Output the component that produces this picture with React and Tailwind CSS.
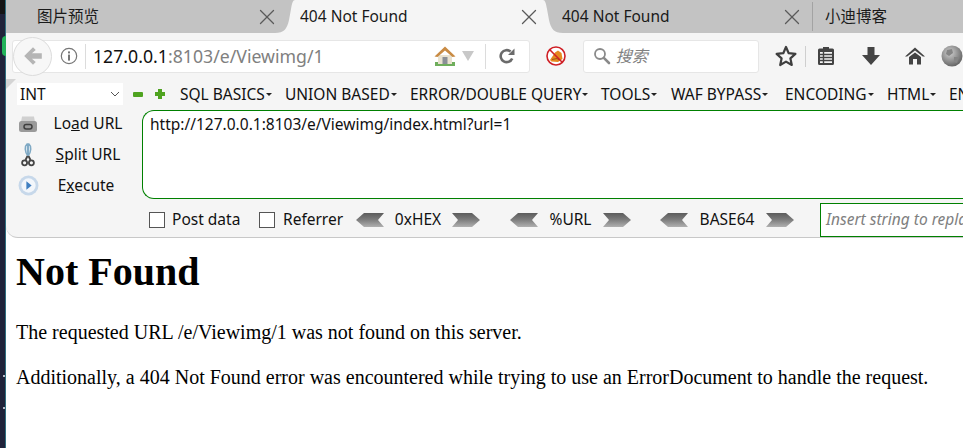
import React from "react";
import { X } from "lucide-react";

const uiFont = "font-['Noto_Sans','Noto_Sans_CJK_SC',sans-serif]";

function TabCurve({ flip }) {
  return (
    <svg width="20" height="33" viewBox="0 0 20 33" className={flip ? "shrink-0 -scale-x-100" : "shrink-0"}>
      <path d="M0 33 C9 33 12 29 14 20 L16 9 C17 3 18 0 20 0 L20 33 Z" fill="#f5f5f5" />
    </svg>
  );
}

function Tab({ label, className, textClass = "", closeClass = "", noClose }) {
  return (
    <div className={`flex h-full items-center ${className}`}>
      <span className={`truncate text-[15.5px] text-[#1a1a1a] ${textClass}`}>{label}</span>
      {!noClose && <X size={26} strokeWidth={1.2} className={`ml-auto shrink-0 text-[#5a5a5a] ${closeClass}`} />}
    </div>
  );
}

function BackIcon() {
  return (
    <svg width="22" height="22" viewBox="0 0 20 20">
      <path d="M10 2 L2 10 L10 18 L12.5 15.5 L9 12.5 L18 12.5 L18 7.5 L9 7.5 L12.5 4.5 Z" fill="#b5b5b5" />
    </svg>
  );
}

function InfoIcon() {
  return (
    <svg width="18" height="18" viewBox="0 0 18 18">
      <circle cx="9" cy="9" r="7.7" fill="none" stroke="#777" strokeWidth="1.2" />
      <rect x="8" y="4.4" width="2" height="2" fill="#777" />
      <rect x="8" y="7.6" width="2" height="6" fill="#777" />
    </svg>
  );
}

function HouseIcon() {
  return (
    <svg width="22" height="22" viewBox="0 0 22 22">
      <rect x="1" y="17" width="20" height="4" fill="#6fae5c" />
      <path d="M4 10 L18 10 L18 19 L4 19 Z" fill="#e9e2d0" />
      <rect x="8.5" y="12" width="5" height="7" fill="#8a8f96" />
      <path d="M0.5 11.5 L11 1.5 L21.5 11.5 L18.5 12 L11 5.5 L3.5 12 Z" fill="#c98b44" />
    </svg>
  );
}

function ReloadIcon() {
  return (
    <svg width="18" height="18" viewBox="0 0 18 18">
      <path d="M14.2 11.5 A6 6 0 1 1 12.6 4.6" fill="none" stroke="#6b6b6b" strokeWidth="2.6" />
      <path d="M10 8 L16.5 8 L16.5 1.5 Z" fill="#6b6b6b" />
    </svg>
  );
}

function NoScriptIcon() {
  return (
    <svg width="20" height="20" viewBox="0 0 20 20">
      <circle cx="10" cy="10" r="9" fill="#fff" />
      <path d="M4 14 L9 6.5 L12 4.5 L15.5 7 L16.5 13 L12 16 L5.5 15.5 Z" fill="#e5891f" />
      <path d="M6 13.5 L11 12.5 L13 14" fill="none" stroke="#9b5a12" strokeWidth="1" />
      <circle cx="10" cy="10" r="9" fill="none" stroke="#cf1f25" strokeWidth="1.6" />
      <path d="M3.8 3.8 L16.2 16.2" stroke="#cf1f25" strokeWidth="1.6" />
    </svg>
  );
}

function SearchIcon() {
  return (
    <svg width="18" height="18" viewBox="0 0 18 18">
      <circle cx="7" cy="7" r="5" fill="none" stroke="#8a8a8a" strokeWidth="1.8" />
      <path d="M10.8 10.8 L16 16" stroke="#8a8a8a" strokeWidth="2.6" strokeLinecap="round" />
    </svg>
  );
}

function StarIcon() {
  return (
    <svg width="22" height="22" viewBox="0 0 22 22">
      <path d="M11 2 L13.7 8.2 L20.4 8.9 L15.4 13.4 L16.8 20 L11 16.6 L5.2 20 L6.6 13.4 L1.6 8.9 L8.3 8.2 Z" fill="none" stroke="#3f3f3f" strokeWidth="2.2" strokeLinejoin="round" />
    </svg>
  );
}

function ClipboardIcon() {
  return (
    <svg width="20" height="20" viewBox="0 0 20 20">
      <path d="M2 4 a1.5 1.5 0 0 1 1.5 -1.5 H7 V1 H13 V2.5 H16.5 a1.5 1.5 0 0 1 1.5 1.5 V17.5 a1.5 1.5 0 0 1 -1.5 1.5 H3.5 a1.5 1.5 0 0 1 -1.5 -1.5 Z" fill="#444" />
      <rect x="4" y="6" width="12" height="11" fill="#f5f5f5" />
      <path d="M4 8.5 H16 M4 11.5 H16 M4 14.5 H16 M7.5 6 V17" stroke="#444" strokeWidth="1.4" />
    </svg>
  );
}

function DownloadIcon() {
  return (
    <svg width="20" height="20" viewBox="0 0 20 20">
      <path d="M6.5 1 H13.5 V9 H19 L10 19 L1 9 H6.5 Z" fill="#444" />
    </svg>
  );
}

function HomeIcon() {
  return (
    <svg width="20" height="20" viewBox="0 0 20 20">
      <path d="M10 1.5 L20 10.5 L17.8 10.5 L10 4.5 L2.2 10.5 L0 10.5 Z" fill="#444" />
      <path d="M4 11 L10 6.5 L16 11 V18.5 H12 V13 H8 V18.5 H4 Z" fill="#444" />
    </svg>
  );
}

function GlobeIcon() {
  return (
    <svg width="22" height="22" viewBox="0 0 22 22">
      <defs>
        <radialGradient id="globeShade" cx="40%" cy="35%" r="70%">
          <stop offset="0%" stopColor="#d0d0d0" />
          <stop offset="100%" stopColor="#5f5f5f" />
        </radialGradient>
      </defs>
      <circle cx="11" cy="11" r="10.5" fill="url(#globeShade)" />
      <path d="M6 5 L11 4 L12 8 L8 11 L5 9 Z M13 12 L18 12 L16 18 L13 17 Z" fill="#858585" />
    </svg>
  );
}

function DriveIcon() {
  return (
    <svg width="22" height="20" viewBox="0 0 20 20">
      <path d="M4 2.5 H16 L17 8 H3 Z" fill="#d0d0d0" />
      <rect x="1" y="7" width="18" height="11" rx="2.5" fill="#9a9a9a" />
      <rect x="6" y="10.5" width="8" height="4.5" rx="2.2" fill="none" stroke="#3f3f3f" strokeWidth="1.5" />
    </svg>
  );
}

function ScissorsIcon() {
  return (
    <svg width="14" height="24" viewBox="0 0 14 24">
      <path d="M7 13 C3.5 9 3.5 3 6 1 L6.8 1 L6.8 12 M7 13 C10.5 9 10.5 3 8 1 L7.2 1 L7.2 12" fill="#dce9f2" stroke="#7fa9c4" strokeWidth="1.5" />
      <path d="M6.5 13 L4.5 17 M7.5 13 L9.5 17" stroke="#444" strokeWidth="1.8" />
      <circle cx="3.6" cy="19.8" r="2.5" fill="none" stroke="#444" strokeWidth="1.8" />
      <circle cx="10.4" cy="19.8" r="2.5" fill="none" stroke="#444" strokeWidth="1.8" />
    </svg>
  );
}

function PlayIcon() {
  return (
    <svg width="21" height="21" viewBox="0 0 20 20">
      <circle cx="10" cy="10" r="9.5" fill="#c7d8ea" />
      <circle cx="10" cy="10" r="6.8" fill="#f2f6fb" />
      <path d="M8 6 L13 10 L8 14 Z" fill="#3f7ec0" />
    </svg>
  );
}

function Chevron({ right }) {
  return (
    <svg width="28" height="16" viewBox="0 0 28 16" className={right ? "shrink-0 -scale-x-100" : "shrink-0"}>
      <defs>
        <linearGradient id="chevronShade" x1="0" y1="0" x2="0" y2="1">
          <stop offset="0%" stopColor="#5c5c5c" />
          <stop offset="45%" stopColor="#7a7a7a" />
          <stop offset="100%" stopColor="#b0b0b0" />
        </linearGradient>
      </defs>
      <path d="M8 1 H28 L22 8 L28 15 H8 L0 8 Z" fill="url(#chevronShade)" />
    </svg>
  );
}

function MenuItem({ label, className }) {
  return (
    <div className={`flex shrink-0 items-center pt-[2px] ${className}`}>
      <span className="whitespace-nowrap">{label}</span>
      <span className="ml-[1px] mb-[2px] h-0 w-0 border-x-[3px] border-t-[3px] border-x-transparent border-t-[#222]" />
    </div>
  );
}

function SideButton({ icon, children }) {
  return (
    <div className="flex h-[31px] items-center">
      <div className="flex w-[24px] justify-center">{icon}</div>
      <div className="w-[96px] text-center">{children}</div>
    </div>
  );
}

function Encoder({ label, className }) {
  return (
    <div className={`flex shrink-0 items-center ${className}`}>
      <Chevron />
      <span className="flex-1 text-center">{label}</span>
      <Chevron right />
    </div>
  );
}

export default function App() {
  return (
    <div className="flex h-[448px] w-[963px] overflow-hidden bg-white">
      {/* desktop behind the window */}
      <div className="relative w-[6px] shrink-0 border-r border-[#2f6f80] bg-[#20233a]">
        <div className="h-[14px] bg-[#151515]" />
        <div className="absolute left-[2px] top-[36px] h-[20px] w-[4px] rounded-l-full bg-[#22b35a]" />
        <div className="absolute left-[3px] top-[375px] h-[2px] w-[2px] bg-[#b8bcc8]" />
        <div className="absolute left-[3px] top-[407px] h-[2px] w-[2px] bg-[#b8bcc8]" />
      </div>

      <div className={`flex min-w-0 flex-1 flex-col ${uiFont}`}>
        {/* Tabs */}
        <div className="flex h-[33px] shrink-0 bg-[#c3c3c3]">
          <Tab label="图片预览" className="w-[269px] pl-[31px]" closeClass="-mr-[5px]" />
          <TabCurve />
          <Tab label="404 Not Found" className="w-[248px] bg-[#f5f5f5] pl-[5px] pr-[1px]" />
          <TabCurve flip />
          <Tab label="404 Not Found" className="w-[249px] pr-[7px]" textClass="-ml-[1px]" />
          <div className="my-[2px] w-px bg-[#a3a3a3]" />
          <Tab label="小迪博客" className="min-w-0 flex-1 pl-[12px]" noClose />
        </div>

        {/* Navigation toolbar */}
        <div className="flex h-[46px] shrink-0 items-center bg-[#f5f5f5]">
          <div className="relative ml-[6px] flex h-[33px] w-[523px] items-center rounded-[3px] border border-[#e6e6e6] bg-white pl-[47px]">
            <div className="absolute left-[0px] top-[-4px] flex h-[39px] w-[39px] items-center justify-center rounded-full border border-[#dcdcdc] bg-[#f7f7f7]">
              <BackIcon />
            </div>
            <InfoIcon />
            <div className="ml-[7px] h-[25px] w-px bg-[#dcdcdc]" />
            <div className="ml-[7px] flex-1 whitespace-nowrap text-[17.7px] text-[#808080]">
              <span className="text-[#111]">127.0.0.1</span>:8103/e/Viewimg/1
            </div>
            <HouseIcon />
            <div className="ml-[6px] h-0 w-0 border-x-[6px] border-t-[10px] border-x-transparent border-t-[#c8c8c8]" />
            <div className="ml-[11px] h-[25px] w-px bg-[#dcdcdc]" />
            <div className="ml-[12px] mr-[13px]"><ReloadIcon /></div>
          </div>
          <div className="ml-[16px]"><NoScriptIcon /></div>
          <div className="ml-[17px] flex h-[33px] w-[178px] items-center rounded-[3px] border border-[#e6e6e6] bg-white pl-[9px]">
            <SearchIcon />
            <span className="ml-[5px] text-[16px] italic text-[#808080]">搜索</span>
          </div>
          <div className="ml-[16px]"><StarIcon /></div>
          <div className="ml-[8px] h-[21px] w-px bg-[#cfcfcf]" />
          <div className="ml-[10px]"><ClipboardIcon /></div>
          <div className="ml-[25px]"><DownloadIcon /></div>
          <div className="ml-[24px]"><HomeIcon /></div>
          <div className="ml-[16px] shrink-0"><GlobeIcon /></div>
        </div>

        {/* HackBar */}
        <div className="relative h-[159px] shrink-0 rounded-bl-[12px] border-b border-[#c8c8c8] bg-[#f5f5f5] text-[15.5px] text-[#111]">
          <div className="absolute left-0 top-0 h-0 w-0 border-r-[10px] border-t-[10px] border-r-transparent border-t-[#d4d4d4]" />
          <div className="flex h-[30px] items-center overflow-hidden pl-[11px]">
            <div className="flex h-[22px] w-[106px] shrink-0 items-center justify-between bg-white pl-[3px] pr-[3px]">
              <span className="pt-[2px]">INT</span>
              <svg width="10" height="6" viewBox="0 0 10 6"><path d="M1 1 L5 5 L9 1" fill="none" stroke="#555" strokeWidth="1" /></svg>
            </div>
            <div className="ml-[10px] h-[5px] w-[10px] shrink-0 rounded-[1px] bg-[#4fa320]" />
            <svg width="12" height="12" viewBox="0 0 12 12" className="ml-[11px] shrink-0">
              <path d="M4 1 H8 V4 H11 V8 H8 V11 H4 V8 H1 V4 H4 Z" fill="#4fa320" />
            </svg>
            <MenuItem label="SQL BASICS" className="ml-[14px] w-[105px]" />
            <MenuItem label="UNION BASED" className="w-[125px]" />
            <MenuItem label="ERROR/DOUBLE QUERY" className="w-[191px]" />
            <MenuItem label="TOOLS" className="w-[70px]" />
            <MenuItem label="WAF BYPASS" className="w-[114px]" />
            <MenuItem label="ENCODING" className="w-[102px]" />
            <MenuItem label="HTML" className="w-[62px]" />
            <span className="shrink-0 pt-[2px]">ENCRYPTION</span>
          </div>

          <div className="flex h-[94px] pl-[10px]">
            <div className="flex w-[126px] shrink-0 flex-col">
              <div className="-mt-[1px]">
                <SideButton icon={<DriveIcon />}>Lo<span className="underline">a</span>d URL</SideButton>
                <SideButton icon={<ScissorsIcon />}><span className="underline">S</span>plit URL</SideButton>
                <SideButton icon={<PlayIcon />}><span className="mr-[4px]">E<span className="underline">x</span>ecute</span></SideButton>
              </div>
            </div>
            <div className="mt-[1px] h-[89px] flex-1 rounded-l-[12px] border border-r-0 border-[#008000] bg-white pl-[7px] pt-[2px]">
              http://127.0.0.1:8103/e/Viewimg/index.html?url=1
            </div>
          </div>

          <div className="flex h-[34px] overflow-hidden pl-[143px]">
            <div className="flex h-full shrink-0 items-center">
              <div className="h-[16px] w-[16px] shrink-0 border border-[#555] bg-white" />
              <span className="ml-[7px] w-[87px] shrink-0">Post data</span>
              <div className="h-[16px] w-[16px] shrink-0 border border-[#555] bg-white" />
              <span className="ml-[8px] w-[73px] shrink-0">Referrer</span>
              <Encoder label="0xHEX" className="w-[124px]" />
              <Encoder label="%URL" className="ml-[30px] w-[121px]" />
              <Encoder label="BASE64" className="ml-[29px] w-[134px]" />
            </div>
            <div className="ml-[26px] flex h-full min-w-0 flex-1 items-center border border-r-0 border-[#008000] bg-white pl-[5px] italic text-[#808080]">
              <span className="whitespace-nowrap">Insert string to replace</span>
            </div>
          </div>
        </div>

        {/* Page */}
        <div className="flex-1 pl-[10px] font-['Liberation_Serif',serif] text-black">
          <h1 className="mt-[11px] text-[40px] font-bold leading-[46px]">Not Found</h1>
          <p className="mt-[26px] text-[20px] leading-[23px]">The requested URL /e/Viewimg/1 was not found on this server.</p>
          <p className="mt-[22px] text-[20px] leading-[23px]">Additionally, a 404 Not Found error was encountered while trying to use an ErrorDocument to handle the request.</p>
        </div>
      </div>
    </div>
  );
}
